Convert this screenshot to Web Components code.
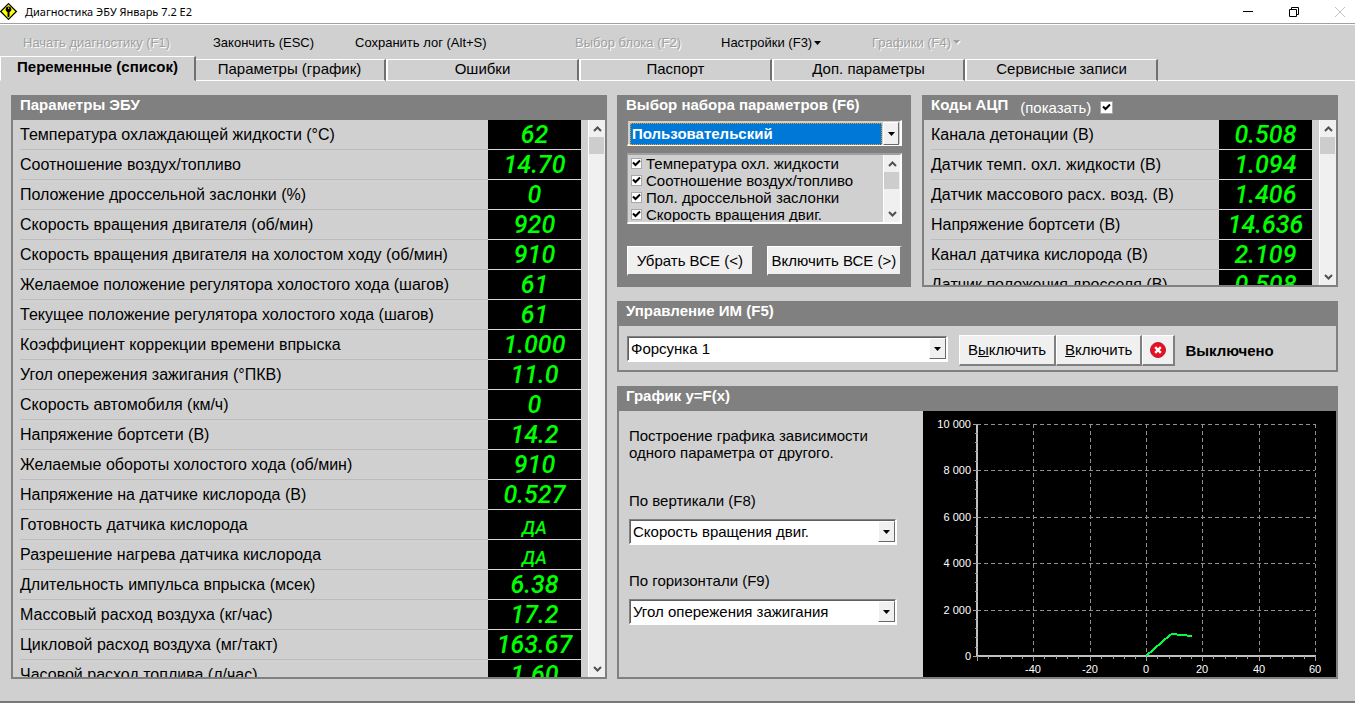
<!DOCTYPE html>
<html lang="ru">
<head>
<meta charset="utf-8">
<title>Диагностика ЭБУ Январь 7.2 E2</title>
<style>
  html, body { margin: 0; height: 100%; }
  body { background: #d0d0d0; color: #000; font-family: "Liberation Sans", Arial, sans-serif; font-size: 16px; }
</style>
</head>
<body>
<ecu-app></ecu-app>
<script>
const define = (name, html, setup) => {
  const tpl = document.createElement('template');
  tpl.innerHTML = html;
  customElements.define(name, class extends HTMLElement {
    constructor() {
      super();
      this.attachShadow({ mode: 'open' }).append(tpl.content.cloneNode(true));
    }
    connectedCallback() {
      if (setup && !this.ready) { this.ready = true; setup(this, this.shadowRoot); }
    }
  });
};

/* Window caption */
define('title-bar', `
<style>
  :host { display: flex; align-items: center; height: 23px; background: #fff; border-bottom: 1px solid #a0a0a0; font: 11px/16px "Noto Sans", sans-serif; }
  h1 { margin: 0 auto 0 8px; font: inherit; }
  button { border: 0; padding: 0; background: none; width: 46px; height: 20px; display: grid; place-items: center; }
  .sys { display: flex; margin-right: -8px; overflow: hidden; }
</style>
<svg width="17" height="17" viewBox="0 0 17 17" aria-hidden="true"><path d="M8.500.7 16.300 8.500 8.500 16.300.7 8.500z" fill="#ff0" stroke="#000" stroke-width="1.200"/><circle cx="8.500" cy="6.300" r="2.800"/><path d="M7.500 8h2v5.500l-1 .8-1-.8z"/><path d="M8 4.600h1.200v1.200H8z" fill="#ff0"/></svg>
<h1>Диагностика ЭБУ Январь 7.2 E2</h1>
<div class="sys">
  <button aria-label="Свернуть"><svg width="10" height="10"><path d="M0 4.500h10" stroke="#000"/></svg></button>
  <button aria-label="Восстановить"><svg width="10" height="10" fill="none" stroke="#000"><path d="M.5 2.500h7v7h-7zM2.500 2.500v-2h7v7h-2"/></svg></button>
  <button aria-label="Закрыть"><svg width="10" height="10"><path d="M0 0 10 10M10 0 0 10" stroke="#c4c4c4"/></svg></button>
</div>`);

/* Main menu */
define('menu-bar', `
<style>
  :host { display: grid; grid-template-columns: 190px 142px 220px 146px 151px auto; justify-content: start; align-items: center; height: 32px; padding: 4px 23px 0; border-top: 1px solid #fff; box-sizing: border-box; }
  button { border: 0; padding: 0; background: none; font: 13px/16px "Liberation Sans", Arial, sans-serif; color: #000; text-align: left; white-space: nowrap; display: flex; align-items: center; gap: 2px; }
  button:disabled { color: #a0a0a0; text-shadow: 1px 1px 0 #fff; }
</style>
<button disabled>Начать диагностику (F1)</button>
<button>Закончить (ESC)</button>
<button>Сохранить лог (Alt+S)</button>
<button disabled>Выбор блока (F2)</button>
<button>Настройки (F3)<svg width="7" height="4"><path d="M0 0h7L3.500 4z"/></svg></button>
<button disabled>Графики (F4)<svg width="8" height="5"><path d="M1 1h7L4.500 5z" fill="#fff"/><path d="M0 0h7L3.500 4z" fill="#a0a0a0"/></svg></button>`);

/* Page tabs */
define('tab-strip', `
<style>
  :host { display: flex; align-items: flex-end; height: 25px; }
  button { box-sizing: border-box; flex: 0 1 193px; height: 22px; padding: 0 0 2px; background: #d0d0d0; border: 0 solid; border-color: #fff #707070 #fff #fff; border-width: 1px 2px 1px 2px; font: 15px/18px "Liberation Sans", Arial, sans-serif; color: #000; white-space: nowrap; }
  button[aria-selected=true] { flex-basis: 196px; margin-right: -3px; z-index: 1; height: 25px; border-left-width: 1px; border-bottom-color: #d0d0d0; font-weight: bold; padding-bottom: 4px; }
  span { flex: 1; height: 1px; background: #fff; }
</style>
<button role="tab" aria-selected="true">Переменные (список)</button>
<button role="tab">Параметры (график)</button>
<button role="tab">Ошибки</button>
<button role="tab">Паспорт</button>
<button role="tab">Доп. параметры</button>
<button role="tab">Сервисные записи</button>
<span></span>`);

/* Titled frame */
define('group-panel', `
<style>
  :host { display: flex; flex-direction: column; min-width: 0; min-height: 0; box-sizing: border-box; border: 2px solid #808080; border-top: 0; }
  header { display: flex; align-items: flex-start; gap: 12px; height: 25px; flex: none; padding-left: 7px; background: #808080; color: #fff; }
  h2 { margin: 0; font: bold 15px/20px "Liberation Sans", Arial, sans-serif; white-space: nowrap; }
  .body { flex: 1; min-height: 0; display: flex; }
  ::slotted(*) { flex: 1; min-width: 0; }
  ::slotted([slot=extra]) { flex: none; }
  :host([dark]) .body { background: #808080; }
</style>
<header><h2></h2><slot name="extra"></slot></header>
<div class="body"><slot></slot></div>`, (el, r) => { r.querySelector('h2').textContent = el.getAttribute('caption'); });

/* Vertical scroll bar */
define('scroll-rail', `
<style>
  :host { display: flex; flex-direction: column; flex: none; width: 17px; background: #f0f0f0; border-left: 1px solid #fff; box-sizing: border-box; }
  button { border: 0; padding: 0; height: 17px; background: none; display: grid; place-items: center; }
  i { height: 17px; background: #cdcdcd; margin-right: 1px; }
  span { flex: 1; }
</style>
<button aria-label="Вверх"><svg width="9" height="6"><path d="M1 5 4.500 1.500 8 5" fill="none" stroke="#505050" stroke-width="2"/></svg></button>
<i></i><span></span>
<button aria-label="Вниз"><svg width="9" height="6"><path d="M1 1 4.500 4.500 8 1" fill="none" stroke="#505050" stroke-width="2"/></svg></button>`);

/* Table of live readings */
define('readout-table', `
<style>
  :host { display: flex; overflow: hidden; }
  .view { flex: 1; overflow: hidden; padding: 0 7px; }
  table { width: 100%; border-spacing: 0; table-layout: fixed; }
  th, td { height: 29px; padding: 0; border-bottom: 1px solid #bcbcbc; }
  th { font: 16px/18px "Liberation Sans", Arial, sans-serif; text-align: left; white-space: nowrap; }
  td { width: 93px; background: #000; color: #0f0; text-align: center; font: italic 500 25px/29px Roboto, sans-serif; border-color: #d8d8d8; }
  .word { font-size: 18px; padding-top: 6px; line-height: 23px; height: 23px; }
</style>
<div class="view"><table><tbody></tbody></table></div>
<scroll-rail></scroll-rail>`, (el, r) => {
  const body = r.querySelector('tbody');
  for (const [name, value] of DATA[el.getAttribute('source')]) {
    const row = body.insertRow();
    const th = document.createElement('th');
    th.scope = 'row';
    th.textContent = name;
    row.append(th);
    const td = row.insertCell();
    td.textContent = value;
    if (value === 'ДА') td.className = 'word';
  }
});

/* Drop-down list */
define('combo-box', `
<style>
  :host { display: block; }
  label { display: block; font: 15px/18px "Liberation Sans", Arial, sans-serif; margin-bottom: 9px; }
  label:empty { display: none; }
  .box { display: grid; grid-template-columns: 1fr 17px; height: 26px; box-sizing: border-box; background: #fff; border: 1px solid #808080; border-right: 2px solid #fff; border-bottom: 2px solid #fff; }
  select { appearance: none; grid-area: 1 / 1 / 2 / 3; min-width: 0; border: 1px solid #606060; border-right: 0; border-bottom: 0; border-radius: 0; background: none; margin: 0; padding: 0 18px 0 2px; font: 15px/20px "Liberation Sans", Arial, sans-serif; color: #000; outline: 0; }
  .arrow { grid-area: 1 / 2; margin: 1px 0; background: #f0f0f0; border: 1px solid #fff; border-right-color: #696969; border-bottom-color: #696969; display: grid; place-items: center; pointer-events: none; }
  :host([active]) .box { background: #d0d0d0; }
  :host([active]) select { background: #0078d7; color: #fff; font-weight: bold; border: 1px dotted #f90; margin: 2px 18px 1px 2px; padding: 0 0 0 1px; }
  :host([active]) .arrow { margin: 1px 1px 1px 0; }
</style>
<label for="s"></label>
<div class="box"><select id="s"></select><span class="arrow"><svg width="7" height="4"><path d="M0 0h7L3.500 4z"/></svg></span></div>`, (el, r) => {
  const s = r.querySelector('select');
  s.add(new Option(el.getAttribute('value')));
  if (el.hasAttribute('label')) r.querySelector('label').textContent = el.getAttribute('label');
  else s.setAttribute('aria-label', el.getAttribute('name'));
});

/* Tick box with caption */
define('check-item', `
<style>
  :host { display: block; }
  label { display: flex; align-items: center; gap: 4px; height: 17px; font: 15px/17px "Liberation Sans", Arial, sans-serif; white-space: nowrap; }
  .tick { display: grid; flex: none; width: 11px; height: 11px; }
  input { appearance: none; grid-area: 1 / 1; margin: 0; width: 100%; height: 100%; background: #fff; outline: 1px solid #a8a8a8; outline-offset: -1px; }
  svg { grid-area: 1 / 1; place-self: center; pointer-events: none; }
  input:not(:checked) + svg { visibility: hidden; }
  :host([trailing]) label { flex-direction: row-reverse; gap: 9px; height: 25px; }
  :host([trailing]) .tick { width: 13px; height: 13px; }
</style>
<label><span class="tick"><input type="checkbox" checked><svg width="9" height="9" viewBox="0 0 9 9"><path d="M1 3.500 3.500 6 8 1.500" fill="none" stroke="#000" stroke-width="2"/></svg></span><slot></slot></label>`);

/* Raised push button */
define('bevel-button', `
<style>
  :host { display: block; min-width: 0; }
  button { width: 100%; height: var(--h, 30px); padding: 0 8px; box-sizing: border-box; background: #f0f0f0; border: 1px solid #fff; border-right: 2px solid #808080; border-bottom: 2px solid #808080; font: 15px/18px "Liberation Sans", Arial, sans-serif; color: #000; white-space: nowrap; display: grid; place-items: center; }
  :host([compact]) button { padding: 0 4px; }
  :host([icon]) button { padding: 0 7px; }
</style>
<button><span><slot></slot></span></button>`);

/* y = F(x) plot */
define('xy-chart', `
<style>
  :host { display: block; background: #000; overflow: hidden; }
  svg { display: block; width: 100%; height: 100%; }
  text { font: 11px "Liberation Sans", Arial, sans-serif; fill: #fff; }
  .grid { stroke: #909090; stroke-dasharray: 4 3; }
  .tick { stroke: #a0a0a0; }
  .axis { stroke: #c0c0c0; stroke-width: 2; fill: none; }
  .line { stroke: #00ff40; stroke-width: 2; fill: none; }
  path, line { shape-rendering: crispEdges; }
</style>
<svg viewBox="0 0 413 266" role="img" aria-label="График y=F(x)"></svg>`, (el, r) => {
  const xs = [54, 110, 167, 223, 279, 336, 392], ys = [245, 199, 152, 106, 59, 13];
  let grid = '', tick = '', text = '';
  xs.forEach((x, i) => {
    if (i) {
      grid += `<line class="grid" x1="${x}.5" y1="13" x2="${x}.5" y2="245"/>`;
      text += `<text x="${x}" y="262" text-anchor="middle">${i * 20 - 60}</text>`;
    }
    tick += `M${x}.5 245v5`;
    if (i < 6) for (let k = 1; k < 5; k++) tick += `M${Math.round(x + k * 11.3)}.5 245v3`;
  });
  ys.forEach((y, i) => {
    grid += `<line class="grid" x1="54" y1="${y}.5" x2="392" y2="${y}.5"/>`;
    tick += `M50 ${y}.5h6`;
    text += `<text x="48" y="${y + 4}" text-anchor="end">${i ? i * 2 + ' 000' : 0}</text>`;
    if (i < 5) for (let k = 1; k < 5; k++) tick += `M52 ${Math.round(y - k * 9.3)}.5h3`;
  });
  r.querySelector('svg').innerHTML = `${grid}<path class="axis" d="M54 13V245H393"/><path class="tick" d="${tick}"/><path class="line" d="M223 245 247 224 249 223 259 224 268 225v1"/>${text}`;
});

const DATA = {
  ecu: [
    ['Температура охлаждающей жидкости (°C)', '62'],
    ['Соотношение воздух/топливо', '14.70'],
    ['Положение дроссельной заслонки (%)', '0'],
    ['Скорость вращения двигателя (об/мин)', '920'],
    ['Скорость вращения двигателя на холостом ходу (об/мин)', '910'],
    ['Желаемое положение регулятора холостого хода (шагов)', '61'],
    ['Текущее положение регулятора холостого хода (шагов)', '61'],
    ['Коэффициент коррекции времени впрыска', '1.000'],
    ['Угол опережения зажигания (°ПКВ)', '11.0'],
    ['Скорость автомобиля (км/ч)', '0'],
    ['Напряжение бортсети (В)', '14.2'],
    ['Желаемые обороты холостого хода (об/мин)', '910'],
    ['Напряжение на датчике кислорода (В)', '0.527'],
    ['Готовность датчика кислорода', 'ДА'],
    ['Разрешение нагрева датчика кислорода', 'ДА'],
    ['Длительность импульса впрыска (мсек)', '6.38'],
    ['Массовый расход воздуха (кг/час)', '17.2'],
    ['Цикловой расход воздуха (мг/такт)', '163.67'],
    ['Часовой расход топлива (л/час)', '1.60']
  ],
  adc: [
    ['Канала детонации (В)', '0.508'],
    ['Датчик темп. охл. жидкости (В)', '1.094'],
    ['Датчик массового расх. возд. (В)', '1.406'],
    ['Напряжение бортсети (В)', '14.636'],
    ['Канал датчика кислорода (В)', '2.109'],
    ['Датчик положения дросселя (В)', '0.508']
  ]
};

define('ecu-app', `
<style>
  :host { display: flex; flex-direction: column; height: 100vh; min-height: 620px; box-sizing: border-box; border-bottom: 2px solid #787878; }
  main { flex: 1; min-height: 0; display: grid; grid-template-columns: 596fr 721fr; gap: 10px; padding: 14px 17px 22px 11px; }
  .right { display: grid; grid-template-rows: 192px 71px 1fr; gap: 14px; min-height: 0; min-width: 0; }
  .top { display: grid; grid-template-columns: 294fr 416fr; gap: 11px; min-height: 0; }
  .sets { display: flex; flex-direction: column; padding: 0 7px 0 8px; }
  .list { display: flex; height: 71px; box-sizing: border-box; margin: 7px 0 22px; border: 1px solid #a0a0a0; border-top: 2px solid #a0a0a0; border-right: 2px solid #fff; border-bottom: 2px solid #fff; background: #d0d0d0; }
  .list div { flex: 1; overflow: hidden; padding-left: 3px; }
  .pair { display: grid; grid-template-columns: 127fr 136fr; gap: 13px; }
  .drive { display: flex; align-items: flex-start; padding: 9px 8px; --h: 31px; }
  .drive combo-box { flex: 0 1 321px; margin: 1px 11px 0 0; }
  .drive strong { font-size: 15px; line-height: 31px; margin-left: 10px; }
  .drive svg { display: block; }
  .plot { display: grid; grid-template-columns: 304fr 413fr; }
  .form { padding: 16px 26px 0 10px; font-size: 15px; }
  .form p { margin: 0 0 31px; line-height: 17px; }
  .form combo-box { margin-bottom: 27px; }
</style>
<title-bar></title-bar>
<menu-bar></menu-bar>
<tab-strip role="tablist"></tab-strip>
<main>
  <group-panel caption="Параметры ЭБУ"><readout-table source="ecu"></readout-table></group-panel>
  <div class="right">
    <div class="top">
      <group-panel dark caption="Выбор набора параметров (F6)">
        <div class="sets">
          <combo-box active name="Набор параметров" value="Пользовательский"></combo-box>
          <div class="list">
            <div>
              <check-item>Температура охл. жидкости</check-item>
              <check-item>Соотношение воздух/топливо</check-item>
              <check-item>Пол. дроссельной заслонки</check-item>
              <check-item>Скорость вращения двиг.</check-item>
            </div>
            <scroll-rail></scroll-rail>
          </div>
          <div class="pair">
            <bevel-button compact>Убрать ВСЕ (&lt;)</bevel-button>
            <bevel-button compact>Включить ВСЕ (&gt;)</bevel-button>
          </div>
        </div>
      </group-panel>
      <group-panel caption="Коды АЦП">
        <check-item slot="extra" trailing>(показать)</check-item>
        <readout-table source="adc"></readout-table>
      </group-panel>
    </div>
    <group-panel caption="Управление ИМ (F5)">
      <div class="drive">
        <combo-box name="Исполнительный механизм" value="Форсунка 1"></combo-box>
        <bevel-button>В<u>ы</u>ключить</bevel-button>
        <bevel-button><u>В</u>ключить</bevel-button>
        <bevel-button icon><svg width="16" height="16" viewBox="0 0 16 16" role="img" aria-label="Стоп"><circle cx="8" cy="8" r="7.500" fill="#e81123" stroke="#b8202c"/><path d="M5.200 5.200l5.600 5.600M10.800 5.200l-5.600 5.600" stroke="#fff" stroke-width="2.400"/></svg></bevel-button>
        <strong>Выключено</strong>
      </div>
    </group-panel>
    <group-panel caption="График y=F(x)">
      <div class="plot">
        <div class="form">
          <p>Построение графика зависимости одного параметра от другого.</p>
          <combo-box label="По вертикали (F8)" value="Скорость вращения двиг."></combo-box>
          <combo-box label="По горизонтали (F9)" value="Угол опережения зажигания"></combo-box>
        </div>
        <xy-chart></xy-chart>
      </div>
    </group-panel>
  </div>
</main>`);
</script>
</body>
</html>
